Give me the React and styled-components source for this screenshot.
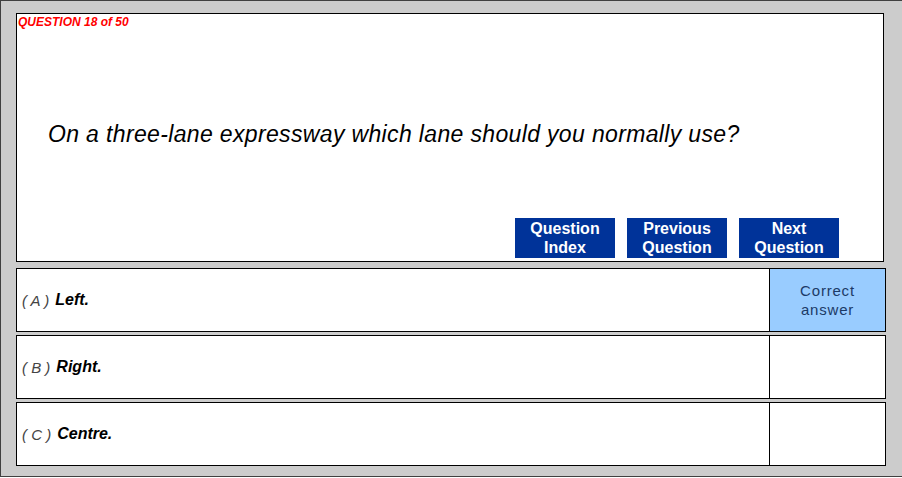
import React from "react";
import styled, { createGlobalStyle } from "styled-components";

const GlobalStyle = createGlobalStyle`
    html, body {
        margin: 0;
        padding: 0;
        background: #ffffff;
        font-family: "Liberation Sans", Arial, sans-serif;
    }
`;

const answers = [
    { letter: "A", text: "Left.", correct: true },
    { letter: "B", text: "Right.", correct: false },
    { letter: "C", text: "Centre.", correct: false },
];

export default function App() {
    return (
        <>
            <GlobalStyle />
            <Frame>
                <QuestionBox>
                    <Counter>QUESTION 18 of 50</Counter>
                    <QuestionText>On a three-lane expressway which lane should you normally use?</QuestionText>
                    <NavBar>
                        <NavButton>Question<br />Index</NavButton>
                        <NavButton>Previous<br />Question</NavButton>
                        <NavButton>Next<br />Question</NavButton>
                    </NavBar>
                </QuestionBox>

                <AnswerList>
                    {answers.map(answer => (
                        <AnswerRow key={answer.letter}>
                            <AnswerCell>
                                <Letter>( {answer.letter} )</Letter>
                                <AnswerText>{answer.text}</AnswerText>
                            </AnswerCell>
                            <ResultCell $correct={answer.correct}>
                                {answer.correct && <>Correct<br />answer</>}
                            </ResultCell>
                        </AnswerRow>
                    ))}
                </AnswerList>
            </Frame>
        </>
    );
}

const Frame = styled.div`
    box-sizing: border-box;
    width: 902px;
    height: 477px;
    padding: 12px 0 10px 15px;

    border-top: 1px solid #404040;
    border-left: 1px solid #404040;
    border-bottom: 1px solid #404040;

    background-color: #cccccc;
`;

const QuestionBox = styled.div`
    box-sizing: border-box;
    width: 868px;
    height: 249px;

    display: flex;
    flex-direction: column;

    border: 1px solid #000000;
    background-color: #ffffff;
`;

const Counter = styled.div`
    margin: 1px 0 0 1px;

    font-size: 12px;
    line-height: 14px;
    font-weight: bold;
    font-style: italic;
    color: #ff0000;
`;

const QuestionText = styled.div`
    margin: 91px 0 0 31px;

    font-size: 23px;
    line-height: 28px;
    font-style: italic;
    letter-spacing: 0.35px;
    color: #000000;
`;

const NavBar = styled.div`
    margin-top: auto;
    padding: 0 44px 3px 0;

    display: flex;
    justify-content: flex-end;
    gap: 12px;
`;

const NavButton = styled.div`
    width: 100px;
    height: 40px;

    display: flex;
    align-items: center;
    justify-content: center;

    background-color: #003399;
    color: #ffffff;

    font-size: 16px;
    line-height: 19px;
    font-weight: bold;
    text-align: center;
`;

const AnswerList = styled.div`
    margin-top: 6px;

    display: flex;
    flex-direction: column;
    gap: 3px;
`;

const AnswerRow = styled.div`
    box-sizing: border-box;
    width: 870px;
    height: 64px;

    display: flex;

    border: 1px solid #000000;
    background-color: #ffffff;
`;

const AnswerCell = styled.div`
    flex: 1;

    display: flex;
    align-items: center;
    gap: 6px;
    padding-left: 5px;

    font-size: 16px;
    font-style: italic;
`;

const Letter = styled.span`
    color: #444444;
    font-size: 15px;
`;

const AnswerText = styled.span`
    color: #000000;
    font-weight: bold;
`;

const ResultCell = styled.div`
    box-sizing: border-box;
    width: 116px;

    display: flex;
    align-items: center;
    justify-content: center;

    border-left: 1px solid #000000;
    background-color: ${props => (props.$correct ? "#99ccff" : "#ffffff")};
    color: #1c3a66;

    font-size: 15px;
    line-height: 19px;
    letter-spacing: 0.8px;
    text-align: center;
`;
